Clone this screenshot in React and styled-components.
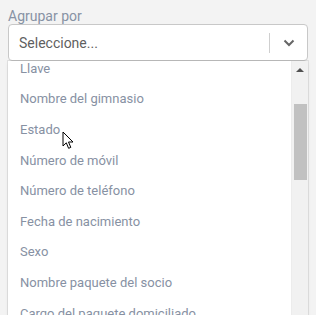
import { useEffect, useRef } from 'react';
import styled, { createGlobalStyle } from 'styled-components';

const GlobalStyle = createGlobalStyle`
  html, body {
    margin: 0;
    padding: 0;
    background: #f3f3f3;
    overflow: hidden;
  }
  body {
    font-family: Roboto, "Liberation Sans", Arial, sans-serif;
  }
`;

const Wrapper = styled.div`
  display: flex;
  flex-direction: column;
  padding: 8px 8px 0 8px;
  height: 315px;
  box-sizing: border-box;
  position: relative;
`;

const Label = styled.label`
  font-size: 14px;
  line-height: 16px;
  color: #8792a4;
`;

const Control = styled.div`
  display: flex;
  align-items: center;
  height: 37px;
  box-sizing: border-box;
  border: 1px solid #c8c8c8;
  border-radius: 4px;
  background: #fff;
`;

const Placeholder = styled.span`
  flex: 1;
  padding-left: 10px;
  font-size: 14px;
  color: #5f5f5f;
`;

const Separator = styled.span`
  width: 1px;
  height: 20px;
  background: #cfcfcf;
`;

const Indicator = styled.div`
  width: 37px;
  display: flex;
  align-items: center;
  justify-content: center;
  color: #666;
`;

const Menu = styled.div`
  flex: 1;
  min-height: 0;
  display: flex;
  background: #fff;
  box-shadow: 0 0 0 1px rgba(0, 0, 0, 0.08), 0 2px 4px rgba(0, 0, 0, 0.06);
`;

const List = styled.ul`
  flex: 1;
  list-style: none;
  margin: 0;
  padding: 0;
  overflow: hidden;
`;

const Option = styled.li`
  height: 30.6px;
  display: flex;
  align-items: center;
  padding-left: 12px;
  font-size: 13px;
  color: #8791a3;
  white-space: nowrap;
`;

const Track = styled.div`
  width: 16px;
  display: flex;
  flex-direction: column;
  align-items: center;
  background: #f1f1f1;
  border-left: 1px solid #ececec;
`;

const ArrowButton = styled.div`
  height: 17px;
  display: flex;
  align-items: center;
  justify-content: center;
`;

const Thumb = styled.div`
  width: 13px;
  height: 76px;
  margin-top: ${p => p.$offset}px;
  background: #c1c1c1;
`;

const Cursor = styled.svg`
  position: absolute;
  left: 62px;
  top: 131px;
`;

const options = [
  'Llave',
  'Nombre del gimnasio',
  'Estado',
  'Número de móvil',
  'Número de teléfono',
  'Fecha de nacimiento',
  'Sexo',
  'Nombre paquete del socio',
  'Cargo del paquete domiciliado',
  'Fecha de alta',
  'Fecha de baja',
];

export default function App() {
  const listRef = useRef(null);

  useEffect(() => {
    if (listRef.current) listRef.current.scrollTop = 8;
  }, []);

  return (
    <>
      <GlobalStyle />
      <Wrapper>
        <Label>Agrupar por</Label>
        <Control>
          <Placeholder>Seleccione...</Placeholder>
          <Separator />
          <Indicator>
            <svg width="12" height="8" viewBox="0 0 12 8">
              <path d="M1.5 1.5 L6 6 L10.5 1.5" fill="none" stroke="#666" strokeWidth="2" />
            </svg>
          </Indicator>
        </Control>
        <Menu>
          <List ref={listRef}>
            {options.map(o => (
              <Option key={o}>{o}</Option>
            ))}
          </List>
          <Track>
            <ArrowButton>
              <svg width="8" height="5" viewBox="0 0 8 5">
                <path d="M0 5 L4 1 L8 5 Z" fill="#505050" />
              </svg>
            </ArrowButton>
            <Thumb $offset={26} />
          </Track>
        </Menu>
        <Cursor width="13" height="20" viewBox="0 0 13 20">
          <path d="M1 1 L1 15 L4.3 11.8 L6.6 17.3 L8.8 16.4 L6.5 11 L11 11 Z" fill="#fff" stroke="#000" strokeWidth="1" strokeLinejoin="round" />
        </Cursor>
      </Wrapper>
    </>
  );
}
